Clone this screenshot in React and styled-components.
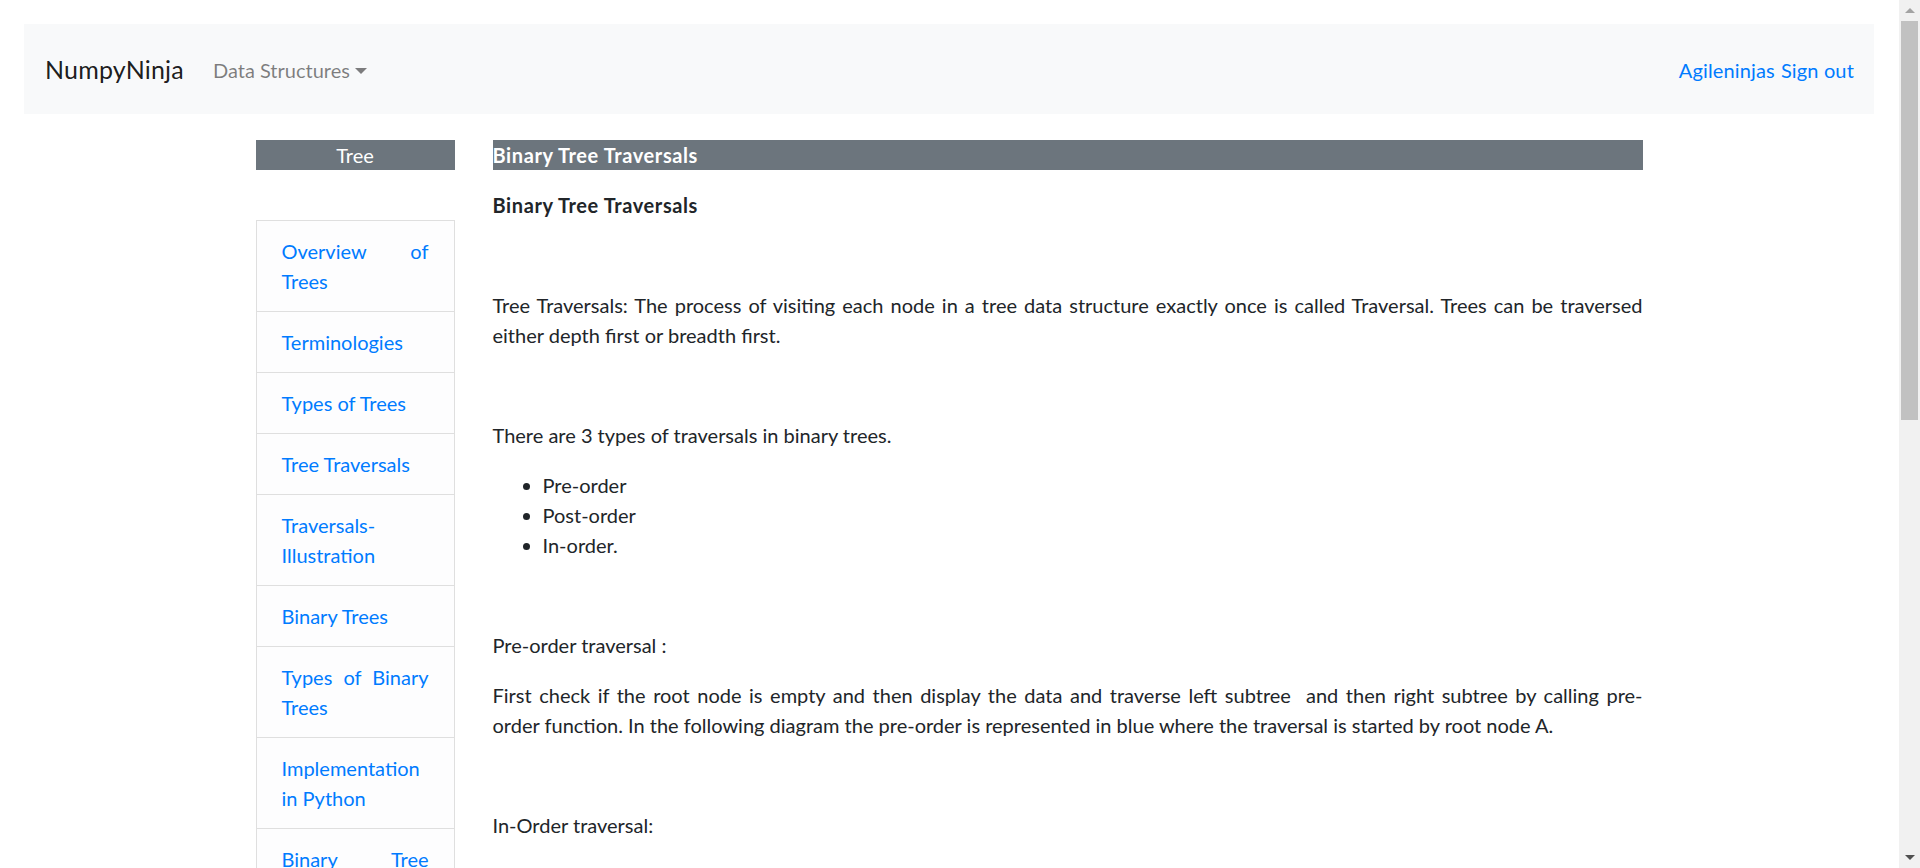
import React from "react";
import styled, { createGlobalStyle } from "styled-components";

const GlobalStyle = createGlobalStyle`
  html, body {
    margin: 0;
    padding: 0;
    overflow: hidden;
    background: #fff;
  }
  body {
    font-family: "Segoe UI", Lato, "Liberation Sans", sans-serif;
    font-size: 20px;
    line-height: 30px;
    color: #212529;
  }
  * { box-sizing: border-box; }
`;

const Frame = styled.div`
  display: flex;
  width: 1920px;
  height: 868px;
  overflow: hidden;
`;

const Page = styled.div`
  flex: 1;
  padding: 24px 25px 0 24px;
  min-width: 0;
`;

const Navbar = styled.nav`
  display: flex;
  align-items: center;
  justify-content: space-between;
  background: #f8f9fa;
  padding: 21px 20px 19px 21px;
  height: 90px;
`;

const NavLeft = styled.div`
  display: flex;
  align-items: center;
`;

const Brand = styled.a`
  font-size: 25px;
  line-height: 37.5px;
  padding: 6px 0;
  margin-right: 19px;
  letter-spacing: 0.2px;
  color: rgba(0, 0, 0, 0.9);
  text-decoration: none;
`;

const NavLink = styled.a`
  display: flex;
  align-items: center;
  padding: 10px;
  color: rgba(0, 0, 0, 0.5);
  text-decoration: none;
`;

const Caret = styled.span`
  display: inline-block;
  margin-left: 5px;
  width: 0;
  height: 0;
  border-top: 6px solid rgba(0, 0, 0, 0.5);
  border-left: 6px solid transparent;
  border-right: 6px solid transparent;
  transform: translateY(1px);
`;

const NavRight = styled.div`
  display: flex;
  gap: 6px;
  letter-spacing: 0.15px;
`;

const BlueLink = styled.a`
  color: #007bff;
  text-decoration: none;
`;

const Content = styled.div`
  display: flex;
  gap: 38px;
  width: 1387px;
  margin: 26px auto 0;
`;

const Sidebar = styled.aside`
  width: 199px;
  flex-shrink: 0;
`;

const SideHeader = styled.div`
  background: #6c757d;
  color: #fff;
  text-align: center;
  line-height: 30px;
  margin-bottom: 50px;
`;

const SideList = styled.ul`
  list-style: none;
  margin: 0;
  padding: 0;
  border: 1px solid #dfdfdf;
  border-bottom: none;
`;

const SideItem = styled.li`
  padding: 15px 25px;
  background: #fdfdfe;
  border-bottom: 1px solid #dfdfdf;
  text-align: justify;
`;

const Main = styled.main`
  flex: 1;
  min-width: 0;
`;

const MainHeader = styled.div`
  background: #6c757d;
  color: #fff;
  font-weight: 700;
  letter-spacing: 0.6px;
  line-height: 30px;
  margin-bottom: 20px;
`;

const Para = styled.p`
  margin: 0 0 20px;
  text-align: justify;
`;

const Strong = styled.strong`
  font-weight: 700;
  letter-spacing: 0.6px;
`;

const Loose = styled.span`
  word-spacing: 2px;
`;

const Bullets = styled.ul`
  margin: 0 0 20px;
  padding-left: 50px;
`;

const Scrollbar = styled.div`
  width: 21px;
  flex-shrink: 0;
  background: #f1f1f1;
  display: flex;
  flex-direction: column;
  align-items: center;
  padding: 0 2px;
`;

const ArrowBox = styled.div`
  height: 21px;
  width: 100%;
  display: flex;
  align-items: center;
  justify-content: center;
`;

const Arrow = styled.span`
  width: 0;
  height: 0;
  border-left: 5px solid transparent;
  border-right: 5px solid transparent;
  ${(p) =>
    p.$down
      ? `border-top: 5px solid #505050;`
      : `border-bottom: 5px solid #a3a3a3;`}
`;

const Thumb = styled.div`
  width: 100%;
  height: 399px;
  background: #c1c1c1;
`;

const Spacer = styled.div`
  flex: 1;
`;

const topics = [
  "Overview of Trees",
  "Terminologies",
  "Types of Trees",
  "Tree Traversals",
  "Traversals-Illustration",
  "Binary Trees",
  "Types of Binary Trees",
  "Implementation in Python",
  "Binary Tree Traversals",
  "Implementation of Binary Trees",
  "Applications of Binary trees",
  "Binary Search Trees",
  "Implementation Of BST",
];

export default function App() {
  return (
    <>
      <GlobalStyle />
      <Frame>
        <Page>
          <Navbar>
            <NavLeft>
              <Brand href="#">NumpyNinja</Brand>
              <NavLink href="#">
                Data Structures
                <Caret />
              </NavLink>
            </NavLeft>
            <NavRight>
              <BlueLink href="#">Agileninjas</BlueLink>
              <BlueLink href="#">Sign out</BlueLink>
            </NavRight>
          </Navbar>
          <Content>
            <Sidebar>
              <SideHeader>Tree</SideHeader>
              <SideList>
                {topics.map((t) => (
                  <SideItem key={t}>
                    <BlueLink href="#">{t}</BlueLink>
                  </SideItem>
                ))}
              </SideList>
            </Sidebar>
            <Main>
              <MainHeader>Binary Tree Traversals</MainHeader>
              <Para>
                <Strong>Binary Tree Traversals</Strong>
              </Para>
              <Para>&nbsp;</Para>
              <Para>
                Tree Traversals: The process of visiting each node in a tree
                data structure exactly once is called Traversal. Trees can be
                traversed either depth first or breadth first.
              </Para>
              <Para>&nbsp;</Para>
              <Para>There are 3 types of traversals in binary trees.</Para>
              <Bullets>
                <li>Pre-order</li>
                <li>Post-order</li>
                <li>In-order.</li>
              </Bullets>
              <Para>&nbsp;</Para>
              <Para>Pre-order traversal :</Para>
              <Para>
                <Loose>
                  First check if the root node is empty and then display the
                  data and traverse left subtree&nbsp; and then right subtree by
                  calling pre-
                </Loose>
                order function. In the following diagram the pre-order is
                represented in blue where the traversal is started by root node
                A.
              </Para>
              <Para>&nbsp;</Para>
              <Para>In-Order traversal:</Para>
              <Para>
                First traverse the left subtree, then display the data of the
                root node and then traverse the right subtree.
              </Para>
            </Main>
          </Content>
        </Page>
        <Scrollbar>
          <ArrowBox>
            <Arrow />
          </ArrowBox>
          <Thumb />
          <Spacer />
          <ArrowBox>
            <Arrow $down />
          </ArrowBox>
        </Scrollbar>
      </Frame>
    </>
  );
}
